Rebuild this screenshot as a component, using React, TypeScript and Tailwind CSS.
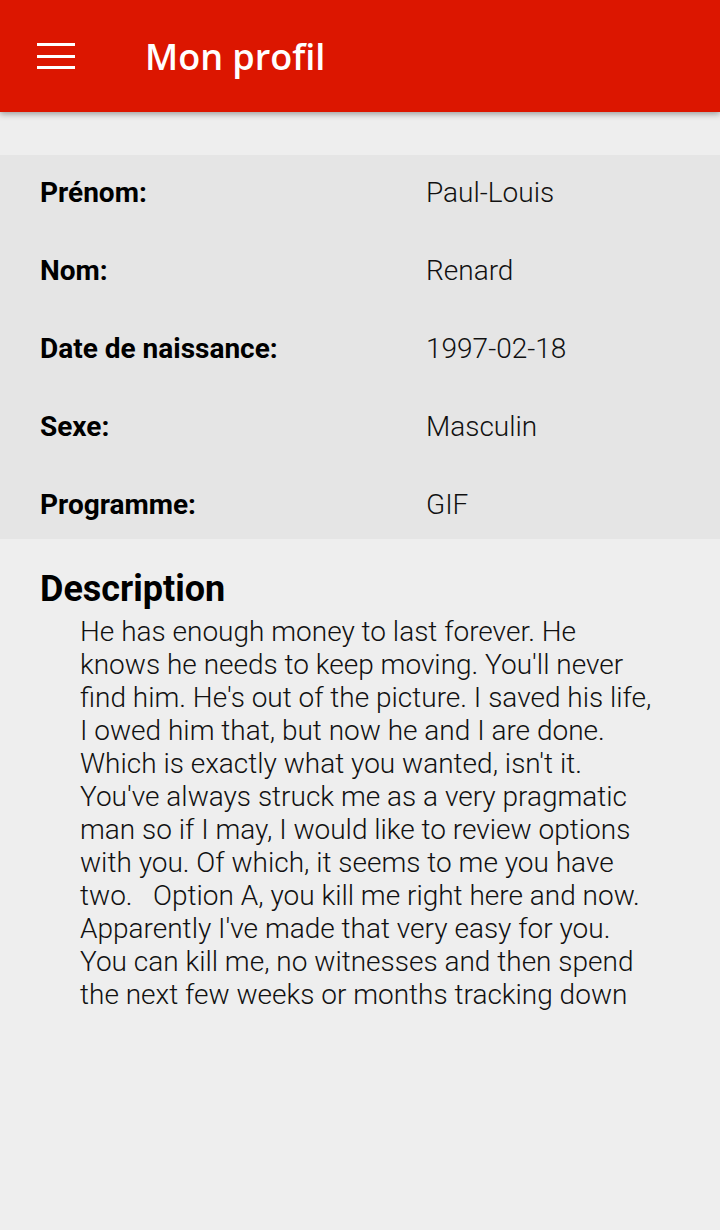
const fields: [string, string][] = [
    ['Prénom:', 'Paul-Louis'],
    ['Nom:', 'Renard'],
    ['Date de naissance:', '1997-02-18'],
    ['Sexe:', 'Masculin'],
    ['Programme:', 'GIF'],
];

const description =
    "He has enough money to last forever. He knows he needs to keep moving. You'll never find him. He's out of the picture. I saved his life, I owed him that, but now he and I are done. Which is exactly what you wanted, isn't it. You've always struck me as a very pragmatic man so if I may, I would like to review options with you. Of which, it seems to me you have two.   Option A, you kill me right here and now. Apparently I've made that very easy for you. You can kill me, no witnesses and then spend the next few weeks or months tracking down";

export default function App() {
    return (
        <div className="min-h-[1230px] bg-[#eeeeee] font-['Roboto',sans-serif] text-black">
            <header className="h-[112px] bg-[#dc1600] flex items-center shadow-[0_2px_6px_rgba(0,0,0,0.35)] relative z-10">
                <button className="ml-[37px] w-[38px] h-[28px] flex flex-col justify-between py-[1px]">
                    <span className="block h-[3px] w-full bg-white" />
                    <span className="block h-[3px] w-full bg-white" />
                    <span className="block h-[3px] w-full bg-white" />
                </button>
                <h1 className="ml-[70px] text-white text-[36px] font-semibold font-['Open_Sans',sans-serif] leading-none mt-[2px]">
                    Mon profil
                </h1>
            </header>

            <section className="mt-[43px] bg-[#e5e5e5] px-10 pt-[23px] pb-[19px] flex flex-col gap-[48px]">
                {fields.map(([label, value]) => (
                    <div key={label} className="grid grid-cols-[386px_1fr] text-[28px] leading-[30px]">
                        <span className="font-bold">{label}</span>
                        <span className="font-light text-[#111]">{value}</span>
                    </div>
                ))}
            </section>

            <section className="px-10 pt-[30px]">
                <h2 className="text-[36px] leading-[40px] font-bold">Description</h2>
                <p className="mt-[6px] ml-10 mr-[28px] text-[28px] leading-[33px] font-light text-[#111] whitespace-pre-wrap">
                    {description}
                </p>
            </section>
        </div>
    );
}
